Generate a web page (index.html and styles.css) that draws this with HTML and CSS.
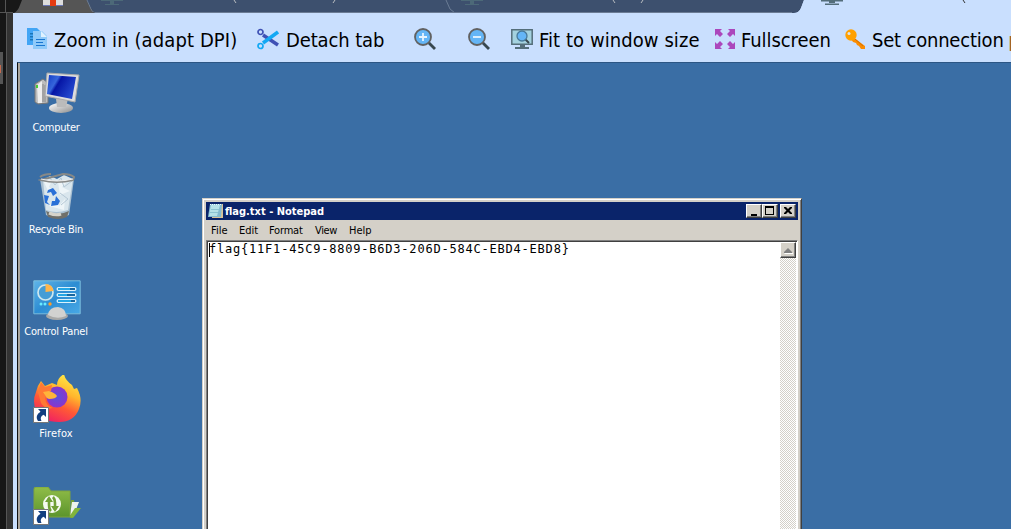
FILE: index.html
```html
<!DOCTYPE html>
<html lang="en">
<head>
<meta charset="utf-8">
<title>Remote desktop</title>
<link rel="stylesheet" href="styles.css">
</head>
<body>
<svg class="defs" width="0" height="0">
  <defs>
    <linearGradient id="screen" x2="1" y2=".5"><stop stop-color="#123cc6"/><stop offset=".35" stop-color="#3666dc"/><stop offset=".45" stop-color="#0515a5"/><stop offset="1" stop-color="#2448ce"/></linearGradient>
    <linearGradient id="metal" x2="1" y2="1"><stop stop-color="#fff"/><stop offset="1" stop-color="#8c8c8c"/></linearGradient>
    <linearGradient id="panel" x2="1" y2="1"><stop stop-color="#5fb4e8"/><stop offset=".5" stop-color="#2d8dd3"/><stop offset="1" stop-color="#48a9e6"/></linearGradient>
    <linearGradient id="fire" x1=".8" y1="0" x2=".35" y2="1"><stop stop-color="#fff04a"/><stop offset=".38" stop-color="#ffb52c"/><stop offset=".65" stop-color="#ff5a35"/><stop offset="1" stop-color="#f02063"/></linearGradient>
    <radialGradient id="globe"><stop stop-color="#5b50dd"/><stop offset="1" stop-color="#8a35cc"/></radialGradient>
    <linearGradient id="folder" x2="0" y2="1"><stop stop-color="#90bd48"/><stop offset="1" stop-color="#5c942c"/></linearGradient>
    <symbol id="shortcut" viewBox="0 0 16 16"><path fill="#fff" stroke="#777" d="M.5.5h15v15H.5z"/><path fill="#123f80" d="M5 2h8v8l-2.300-2.200C8 9 7 11 8.500 14H5C2.500 10 4 7 7.500 4.700z"/></symbol>
  </defs>
</svg>
<div class="app">
  <aside class="rail"><div class="handle"><i></i></div></aside>
  <header class="tabs">
    <svg width="1011" height="13" viewBox="0 0 1011 13">
      <path fill="#181818" d="M0 0h110v13H0z"/>
      <path stroke="#555" fill="none" d="M5.500 0v12M0 12.500h13"/>
      <path fill="#555" d="M22 0h65l7 13H14q4-2 6-8z"/>
      <path fill="#3d506e" d="M87 0h717l-3 8q-2 5-7 5H97q-4-1-6-5z"/>
      <path fill="#c9dffe" d="M806 0h205v13H794q5 0 7-5l3-8z"/>
      <path stroke="#6b7c95" stroke-width="1" fill="none" d="M87 0l4 9q1 3 4 3.500h697M446 0l4 9 5 4"/>
      <path fill="#ddd" d="M43 0h20v6H43z"/><path fill="#e53b11" d="M50 0h6v6h-6z"/><path fill="#6977b8" d="M43 5h7v1h-7zM56 5h7v1h-7z"/>
      <path fill="#4c6978" d="M101 0h22v1h-22zM110 1h4v3h-4zM105 4h14v1h-14zM461 0h22v1h-22zM470 1h4v3h-4zM465 4h14v1h-14z"/>
      <path fill="#536d7a" d="M821 0h22v1.500h-22zM829 1h6v2h-6zM825 3.500h14v1.500h-14z"/>
      <path stroke="#b9bdc1" fill="none" d="M234 0l2 3M335 0l-2 3M613 0l2 3M643 0l-2 3"/><path stroke="#333" fill="none" d="M963 0l2 3"/>
    </svg>
  </header>
  <nav class="toolbar">
    <div class="tool copy"><svg width="22" height="22"><path fill="#42a5f5" d="M0 0h10l5 5v12H0z"/><path fill="#1976b9" d="M3 5h3v1.500H3zm0 3h3v1.500H3zm0 3h3v1.500H3z"/><path fill="#90caf9" d="M6 3h9l5 5v13H6z"/><path fill="#dff1ff" d="M14 3v6h6z"/><path stroke="#1976d2" d="M9 11.500h9M9 14.500h7M9 17.500h9"/></svg><span>Zoom in (adapt DPI)</span></div>
    <div class="tool detach"><svg width="22" height="22" fill="none"><path stroke="#3f51b5" stroke-width="3.500" d="M6 7l15 10"/><circle cx="3.500" cy="4" r="2.500" stroke="#3f51b5" stroke-width="1.700"/><path stroke="#12a8f4" stroke-width="3.500" d="M6 15L21 4"/><circle cx="3.500" cy="18" r="2.500" stroke="#12a8f4" stroke-width="1.700"/></svg><span>Detach tab</span></div>
    <div class="tool plus"><svg width="22" height="22"><path stroke="#37474f" stroke-width="2.800" d="M14 14l7 7"/><circle cx="9" cy="9" r="8" fill="#64b5f6" stroke="#616161" stroke-width="1.800"/><path stroke="#e7f4ff" stroke-width="1.800" d="M5 9h8M9 5v8"/></svg></div>
    <div class="tool minus"><svg width="22" height="22"><path stroke="#37474f" stroke-width="2.800" d="M14 14l7 7"/><circle cx="9" cy="9" r="8" fill="#64b5f6" stroke="#616161" stroke-width="1.800"/><path stroke="#e7f4ff" stroke-width="1.800" d="M5 9h8"/></svg></div>
    <div class="tool fit"><svg width="22" height="22"><path fill="#a4d2df" stroke="#546e7a" stroke-width="1.500" d="M.8 1.800h20.400v14.500H.8z"/><path fill="#546e7a" d="M9 17h5v2h4v2H4v-2h5z"/><path stroke="#37474f" stroke-width="2" d="M14 11l4 4"/><circle cx="11" cy="8" r="5" fill="#64b5f6" stroke="#47799a" stroke-width="1.300"/></svg><span>Fit to window size</span></div>
    <div class="tool full"><svg width="20" height="20" fill="#ab47bc"><g id="arrow"><path d="M0 0h7L5 2l3 3-3 3-3-3-2 2z"/></g><use href="#arrow" transform="matrix(-1 0 0 1 20 0)"/><use href="#arrow" transform="matrix(1 0 0 -1 0 20)"/><use href="#arrow" transform="matrix(-1 0 0 -1 20 20)"/></svg><span>Fullscreen</span></div>
    <div class="tool key"><svg width="21" height="21"><path fill="#fb8c00" d="M8 8l12 9v3h-4l-2-3-2-1-1-2-3-1-2-3z"/><circle cx="6" cy="6" r="5.700" fill="#ffa000"/><circle cx="4" cy="4.500" r="1.500" fill="#d8e5ed"/><path stroke="#d57000" d="M10 10l8 7"/></svg><span>Set connection <b>p</b></span></div>
  </nav>
  <main class="desktop">
    <div class="shortcut computer">
      <svg width="48" height="44" viewBox="0 0 48 44"><path fill="#bdbdbd" stroke="#777" d="M2 13l8-5 5 4v20L5 33l-3-2z"/><path fill="#ededed" d="M4 14l5-4v22H5z"/><path stroke="#888" d="M10 13v18M12 14v17"/><path fill="#4c3" d="M3 14h2v3H3z"/><ellipse cx="28" cy="37" rx="12" ry="5" fill="url(#metal)"/><path fill="#bbb" d="M23 28h12l-2 8h-9z"/><path fill="#ddd" stroke="#aaa" d="M14 2l32 2-4 27-30-6z"/><path fill="url(#screen)" d="M16 4l27 2-4 22-25-5z"/></svg><span>Computer</span></div>
    <div class="shortcut recycle">
      <svg width="38" height="48" viewBox="0 0 38 48"><path fill="#aac0d1" d="M2 7h34l-5 36q-12 6-23 0z"/><path fill="#d9e6ed" d="M5 8l7-4 7 3 7-4 9 4-5 31q-12 4-22 0z"/><path fill="#f7fbfc" fill-opacity=".7" d="M6 10l8-2-3 7 7 5-8-1zM20 10l10-1-6 6 8 4-10 4zM11 34l8-8 2 8 6-7-1 11z"/><path stroke="#b5c8d5" fill="none" d="M12 6l5 7 6-7 3 9 8-6M22 21l8 6-7 6"/><path stroke="#878987" stroke-width="2" fill="none" d="M2 5q4-3 11-3M25 2q7 0 11 3l-1 3q-16 4-32 0z"/><path stroke="#eee" fill="none" d="M3 7q16 4 32 0"/><path fill="#2970d7" d="M10 18l5-2 4 5-4 3-2-4-4 1zM6 23l5 1-2 6 3 3-5-2zM18 24l4 5-2 4-7 1 1-5h3z"/><path fill="#70706a" d="M8 39q11 6 23 0l-2 6q-9 4-19 0z"/><path stroke="#d7d4cb" stroke-width="3" fill="none" d="M11 41q7 3 12 1"/></svg><span>Recycle Bin</span></div>
    <div class="shortcut control">
      <svg width="48" height="42" viewBox="0 0 48 42"><path fill="url(#panel)" stroke="#7abddc" d="M.8.800h46.400v33H.8z"/><circle cx="12.500" cy="12.500" r="7.500" fill="#459dd6" stroke="#cde7ef" stroke-width="1.700"/><path fill="#ffb64b" d="M12.500 12V4q7 0 8 7z"/><path stroke="#d9f1fb" stroke-width="4" stroke-linecap="round" d="M25.500 9h16M25.500 15h16M25.500 21h16"/><path stroke="#23a6e5" stroke-width="2" d="M25 9h12M25 15h9M25 21h13"/><path stroke="#1767a1" stroke-width="2" d="M37 9h5M34 15h8M38 21h4"/><circle cx="8" cy="24" r="1.500" fill="#69ecff"/><circle cx="12" cy="24" r="1.500" fill="#69ecff"/><circle cx="17" cy="24" r="1.700" fill="#ff9d28"/><ellipse cx="24" cy="36" rx="11" ry="4" fill="#a9a9a7"/><path fill="#d2d2d0" d="M15 35q1-8 10-8 8 1 8 9-9 4-18-1z"/></svg><span>Control Panel</span></div>
    <div class="shortcut firefox">
      <svg width="48" height="50" viewBox="0 0 48 50"><path fill="url(#fire)" d="M3 17Q4 11 8 6l4 5 7-3 5 2q0-7 7-11 1 6 8 11l2 4 3-1q6 11 2 21-5 13-20 13Q8 47 3 36-1 26 3 17z"/><circle cx="24" cy="22" r="10.500" fill="url(#globe)"/><path fill="#ff7934" d="M5 17l3-10 4 5 7-2-1 6q-5 1-6 7 1 8 8 10-8 2-12-5z"/><path fill="#ffb43a" d="M12 20l-2-3 6-1q6 2 8 5-1 3-8 3-3-1-4-4z"/></svg><svg class="badge" width="16" height="16"><use href="#shortcut"/></svg><span>Firefox</span></div>
    <div class="shortcut folder">
      <svg width="48" height="35" viewBox="0 0 48 35"><path fill="#739f38" d="M37 31l1-18h3l1 7-3 11z"/><path fill="#edf3ed" d="M37 28l2-13h7l-6 15z"/><path fill="#81b43b" d="M36 30l6-9h6l-8 10z"/><path fill="url(#folder)" stroke="#7ea43d" d="M1 2q0-2 2-2h12l3 4h19v26H1z"/><circle cx="19" cy="17" r="9" fill="#f5faf0"/><path stroke="#71a035" stroke-width="2.600" fill="none" d="M16 11v7q0 4 2 6M22 23v-7q0-4-2-6"/><path fill="#71a035" d="M12 15l4-6 4 6zM18 19l4 6 4-6z"/></svg><svg class="badge" width="16" height="16"><use href="#shortcut"/></svg></div>

    <section class="window">
      <div class="titlebar"><svg width="16" height="18"><path fill="#dbc398" d="M4 2h11v14H4z"/><path fill="#83bad0" d="M2 2h12l-1 13H0z"/><path fill="#b5e2e8" d="M3 3h9L9 14H1z"/><path stroke="#efffff" stroke-dasharray="1 1" d="M2 2.500h12"/><path stroke="#8cc4d2" d="M3 7.500h8M2 10.500h8"/></svg><strong>flag.txt - Notepad</strong>
        <div class="controls"><button aria-label="Minimize"><svg width="14" height="12"><path d="M4 9h6v2H4z"/></svg></button><button aria-label="Maximize"><svg width="14" height="12"><path fill-rule="evenodd" d="M2 1h9v9H2zM3 3v6h7V3z"/></svg></button><button class="close" aria-label="Close"><svg width="14" height="12"><path d="M3 2h2l2 2 2-2h2v1L8.500 5.500 11 8v1H9L7 7 5 9H3V8l2.500-2.500L3 3z"/></svg></button></div>
      </div>
      <div class="menu"><span class="m-file">File</span><span class="m-edit">Edit</span><span class="m-format">Format</span><span class="m-view">View</span><span class="m-help">Help</span></div>
      <div class="editor"><div class="document">flag{11F1-45C9-8809-B6D3-206D-584C-EBD4-EBD8}</div><div class="scrollbar"><button aria-label="Scroll up"><svg width="14" height="13"><path fill="#fff" d="M3 9h9v1H4z"/><path fill="#808080" d="M3 9V8l4-4 4 4v1z"/></svg></button></div></div>
    </section>
  </main>
</div>
</body>
</html>
```

FILE: styles.css
```css
* { box-sizing: border-box; }
body { margin: 0; overflow: hidden; background: #c9dffe; }
svg { display: block; flex: none; }
button { font: inherit; }
.defs { display: block; position: absolute; }
.app { width: 1011px; height: 529px; display: grid; grid-template: 13px 49px 1fr / 13px 1fr; overflow: hidden; }
.tabs { grid-area: 1 / 1 / 2 / 3; }
.rail { grid-area: 2 / 1 / 4 / 2; background: linear-gradient(90deg, #161616 6px, #555 6px 7px, #333 7px); }
.handle { margin-top: 39px; width: 3px; height: 32px; background: #555; padding-top: 13px; overflow: hidden; }
.handle i { display: block; width: 1px; height: 8px; background: #c56a4e; }
.toolbar { grid-area: 2 / 2; display: flex; align-items: center; padding: 3px 0 0 14px; font: 20px "DejaVu Sans Condensed", Tahoma, sans-serif; color: #000; overflow: hidden; white-space: nowrap; }
.tool { display: flex; align-items: center; gap: 5px; flex: none; }
.tool span { padding-top: 2px; }
.copy { width: 230px; letter-spacing: .1px; }
.detach { width: 157px; gap: 7px; letter-spacing: -.12px; }
.plus { width: 54px; }
.minus { width: 43px; }
.fit { width: 204px; gap: 6px; letter-spacing: .07px; }
.full { width: 130px; gap: 6px; letter-spacing: -.06px; }
.key { gap: 6px; letter-spacing: -.2px; }
.key b { font-weight: normal; color: #9b6424; margin-left: -1px; }
.desktop { grid-area: 3 / 2; position: relative; margin-left: 4px; border-left: 1px solid #111; border-top: 1px solid #2c5684; background: linear-gradient(90deg, #aaa69f 2px, #3a6ea5 2px); }
.shortcut { position: absolute; width: 78px; left: -1px; display: flex; flex-direction: column; align-items: center; color: #fff; font: 11px/14px "DejaVu Sans Condensed", Tahoma, sans-serif; white-space: nowrap; }
.shortcut > svg:first-child { margin-left: 2px; }
.computer { top: 8px; }
.computer span { margin-top: 6px; letter-spacing: -.25px; }
.recycle { top: 109px; }
.recycle span { margin-top: 3px; letter-spacing: -.25px; }
.control { top: 217px; }
.control span { margin-top: 3px; letter-spacing: -.15px; }
.firefox { top: 312px; }
.firefox span { margin-top: 2px; letter-spacing: .15px; }
.folder { top: 424px; }
.badge { position: absolute; left: 16px; }
.firefox .badge { top: 32px; }
.folder .badge { top: 22px; }
.window { position: absolute; left: 184px; top: 135px; width: 600px; height: 350px; padding: 3px 2px 0 3px; display: flex; flex-direction: column; background: #d4d0c8; border: 1px solid #d4d0c8; border-right-color: #404040; box-shadow: inset 1px 1px #fff, inset -1px 0 #808080; }
.titlebar { height: 18px; width: 592px; background: #0a246a; display: flex; align-items: center; padding-left: 2px; color: #fff; font: 11px "DejaVu Sans Condensed", Tahoma, sans-serif; letter-spacing: 0; }
.titlebar strong { margin-left: 1px; }
.controls { display: flex; margin-left: auto; margin-right: 2px; }
.controls button, .scrollbar button { padding: 0; border: 1px solid #fff; border-right-color: #404040; border-bottom-color: #404040; border-radius: 0; background: #d4d0c8; box-shadow: inset -1px -1px #808080; }
.controls button { width: 16px; height: 14px; }
.controls .close { margin-left: 2px; }
.menu { height: 20px; padding-left: 5px; display: flex; align-items: center; font: 11px "DejaVu Sans Condensed", Tahoma, sans-serif; color: #000; }
.m-file { width: 28px; }
.m-edit { width: 30px; }
.m-format { width: 46px; letter-spacing: -.2px; }
.m-view { width: 34px; letter-spacing: -.35px; }
.editor { flex: 1; width: 592px; display: flex; background: #fff; border: 1px solid #808080; border-right: 1px solid #fff; box-shadow: inset 1px 1px #404040; padding: 1px 1px 0 1px; }
.document { flex: 1; padding: 0 0 0 1px; color: #000; font: 12px/14px "DejaVu Sans Mono", monospace; letter-spacing: .79px; background: linear-gradient(#000, #000) 1px 1px / 1px 14px no-repeat; }
.scrollbar { width: 16px; background: repeating-conic-gradient(#fff 0 25%, #d4d0c8 0 50%) 0 0 / 2px 2px; }
.scrollbar button { display: block; width: 16px; height: 16px; }
```
